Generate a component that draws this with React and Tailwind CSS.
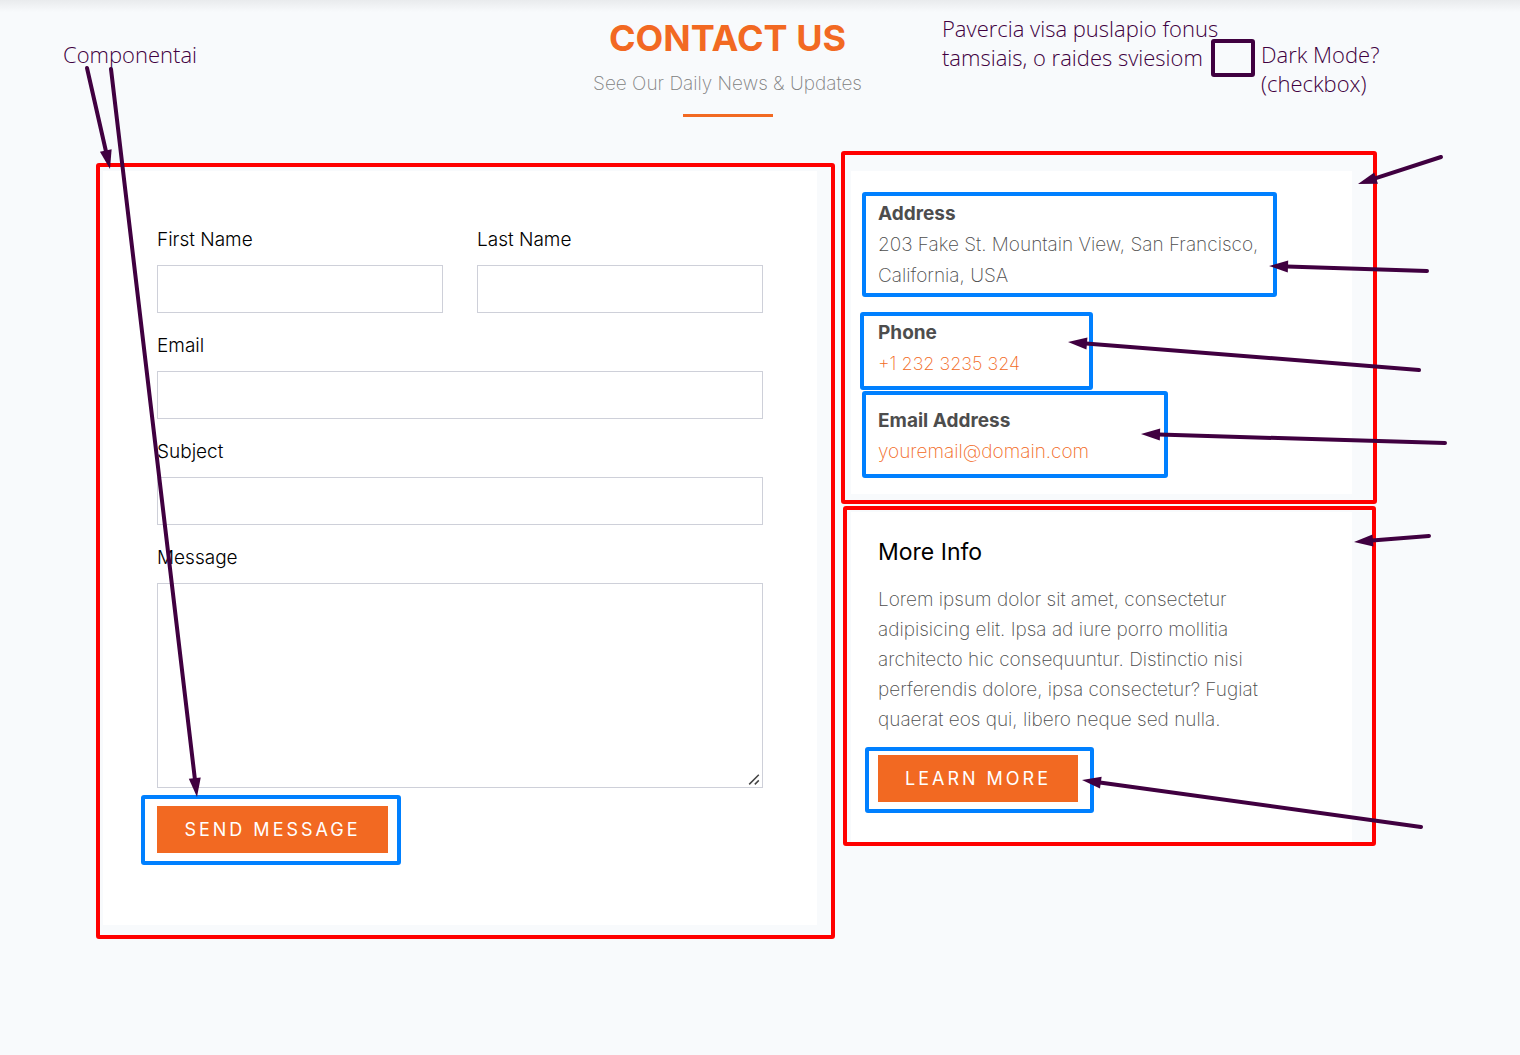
import React from "react";

const frameBase = "pointer-events-none absolute rounded-[3px] border-4";

function Frame({ tone = "red", className }) {
  const color = tone === "red" ? "border-[#ff0000]" : "border-[#0080ff]";
  return <span aria-hidden="true" className={`${frameBase} ${color} ${className}`} />;
}

function Field({ id, label, type = "text" }) {
  return (
    <div className="min-w-0 flex-1">
      <label htmlFor={id} className="mb-[10px] block leading-[30px] font-light text-black">
        {label}
      </label>
      <input
        id={id}
        name={id}
        type={type}
        className="block h-12 w-full border border-[#ced0d9] bg-white px-3 outline-none"
      />
    </div>
  );
}

const actionClass =
  "relative flex h-[47px] items-center justify-center bg-[#f26922] text-[18px] font-normal tracking-[3px] text-white uppercase";

const arrows = [
  { from: [87, 68], to: [110, 169] },
  { from: [111, 69], to: [197, 797] },
  { from: [1441, 157], to: [1358, 184] },
  { from: [1427, 271], to: [1269, 266] },
  { from: [1419, 370], to: [1068, 342] },
  { from: [1445, 443], to: [1141, 434] },
  { from: [1429, 536], to: [1354, 542] },
  { from: [1421, 827], to: [1082, 780] },
];

function Arrow({ from, to }) {
  const dx = to[0] - from[0];
  const dy = to[1] - from[1];
  const len = Math.hypot(dx, dy);
  const angle = (Math.atan2(dy, dx) * 180) / Math.PI;
  return (
    <g transform={`translate(${from[0]} ${from[1]}) rotate(${angle})`}>
      <line x1="0" y1="0" x2={len - 18} y2="0" stroke="#400040" strokeWidth="4" strokeLinecap="round" />
      <polygon points={`${len},0 ${len - 19},-6 ${len - 19},6`} fill="#400040" />
    </g>
  );
}

function Notes() {
  return (
    <div className="font-['Open_Sans','Noto_Sans',sans-serif] text-[22px] leading-[29px] font-light text-[#400040]">
      <p className="absolute top-10 left-[63px]">Componentai</p>
      <p className="absolute top-[14px] left-[942px] whitespace-nowrap">
        Pavercia visa puslapio fonus
        <br />
        tamsiais, o raides sviesiom
      </p>
      <div className="absolute top-[39px] left-[1211px] flex items-start gap-[6px]">
        <input
          id="dark-mode"
          type="checkbox"
          className="h-[38px] w-11 appearance-none rounded-[3px] border-4 border-[#400040] checked:bg-[#400040]"
        />
        <label htmlFor="dark-mode" className="mt-px whitespace-nowrap">
          Dark Mode?
          <br />
          (checkbox)
        </label>
      </div>
    </div>
  );
}

export default function App() {
  return (
    <div className="relative min-h-screen overflow-x-hidden bg-[#f8fafc] font-['Inter',sans-serif] text-[19px] font-extralight text-[#4d4d4d]">
      <div className="absolute inset-x-0 top-0 h-3 bg-linear-to-b from-[#e9ebed] to-[#f8fafc]" />

      <main className="pt-3 pr-[168px] pb-12 pl-[103px]">
        <header className="mb-[54px] flex flex-col items-center">
          <h1 className="text-[36px] leading-[52px] font-bold text-[#f26922]">CONTACT US</h1>
          <p className="mt-[5px] leading-[30px] text-[#808080]">See Our Daily News &amp; Updates</p>
          <div className="mt-[15px] h-[3px] w-[90px] bg-[#f26922]" />
        </header>

        <div className="grid grid-cols-[714fr_501fr] items-start gap-[34px]">
          <form
            className="relative flex flex-col gap-[18px] bg-white px-[54px] pt-[54px] pb-[72px]"
            onSubmit={(e) => e.preventDefault()}
          >
            <div className="flex gap-[34px]">
              <Field id="first-name" label="First Name" />
              <Field id="last-name" label="Last Name" />
            </div>
            <Field id="email" label="Email" type="email" />
            <Field id="subject" label="Subject" />
            <div className="relative">
              <label htmlFor="message" className="mb-[10px] block leading-[30px] font-light text-black">
                Message
              </label>
              <textarea
                id="message"
                name="message"
                className="block h-[205px] w-full resize-y border border-[#ced0d9] bg-white p-3 outline-none"
              />
              <svg
                aria-hidden="true"
                className="pointer-events-none absolute right-px bottom-px bg-white"
                width="14"
                height="14"
                viewBox="0 0 14 14"
                fill="none"
                stroke="#444"
                strokeWidth="1.5"
              >
                <path d="M1.2 11.4 10.8 1.8M6.8 11.4 10.8 7.4" />
              </svg>
            </div>
            <button type="submit" className={`${actionClass} w-[231px]`}>
              Send Message
              <Frame tone="blue" className="-top-[11px] -right-[13px] -bottom-3 -left-4" />
            </button>
            <Frame className="-top-2 -right-[18px] -bottom-[14px] -left-[7px]" />
          </form>

          <aside className="flex flex-col gap-[18px]">
            <section className="relative flex flex-col gap-[26px] bg-white p-[27px] leading-[31px]">
              <div className="relative">
                <h2 className="font-bold">Address</h2>
                <p>
                  203 Fake St. Mountain View, San Francisco,
                  <br />
                  California, USA
                </p>
                <Frame tone="blue" className="-top-[6px] -left-4 h-[105px] w-[415px]" />
              </div>
              <div className="relative">
                <h2 className="font-bold">Phone</h2>
                <a href="tel:+12323235324" className="block w-fit text-[18px] text-[#f26922]">
                  +1 232 3235 324
                </a>
                <Frame tone="blue" className="-top-[5px] -left-[18px] h-[78px] w-[233px]" />
              </div>
              <div className="relative">
                <h2 className="font-bold">Email Address</h2>
                <a href="mailto:youremail@domain.com" className="block w-fit text-[#f26922]">
                  youremail@domain.com
                </a>
                <Frame tone="blue" className="-top-[14px] -left-4 h-[87px] w-[306px]" />
              </div>
              <Frame className="-top-5 -right-[25px] -bottom-[10px] -left-[10px]" />
            </section>

            <section className="relative bg-white px-[27px] pt-[27px] pb-[43px]">
              <h2 className="text-[23px] leading-[26px] font-normal text-black">More Info</h2>
              <p className="mt-5 leading-[30px]">
                Lorem ipsum dolor sit amet, consectetur
                <br />
                adipisicing elit. Ipsa ad iure porro mollitia
                <br />
                architecto hic consequuntur. Distinctio nisi
                <br />
                perferendis dolore, ipsa consectetur? Fugiat
                <br />
                quaerat eos qui, libero neque sed nulla.
              </p>
              <a href="#more" className={`${actionClass} mt-5 w-[200px]`}>
                Learn More
                <Frame tone="blue" className="-top-2 -right-4 -bottom-[11px] -left-[13px]" />
              </a>
              <Frame className="-top-[6px] -right-6 -bottom-px -left-2" />
            </section>
          </aside>
        </div>
      </main>

      <Notes />
      <svg
        aria-hidden="true"
        className="pointer-events-none absolute top-0 left-0"
        width="1520"
        height="1055"
        viewBox="0 0 1520 1055"
      >
        {arrows.map((a) => (
          <Arrow key={a.to.join()} {...a} />
        ))}
      </svg>
    </div>
  );
}
